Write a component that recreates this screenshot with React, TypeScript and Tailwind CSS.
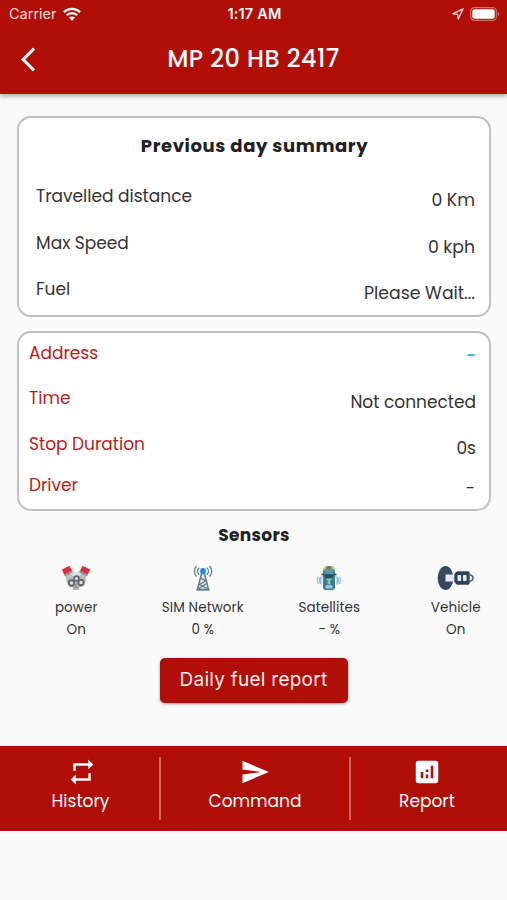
import type { ReactNode } from 'react'
import { MdAnalytics, MdArrowBackIos, MdRepeat, MdSend } from 'react-icons/md'

const summary = [
  { label: 'Travelled distance', value: '0 Km' },
  { label: 'Max Speed', value: '0 kph' },
  { label: 'Fuel', value: 'Please Wait...' },
]

const details = [
  { label: 'Address', value: '-', rowClass: 'h-[45px]', valueClass: 'mt-[3px] font-medium text-[#3aa5dc]' },
  { label: 'Time', value: 'Not connected', rowClass: 'h-[46px]', valueClass: 'mt-1 text-[#333]' },
  { label: 'Stop Duration', value: '0s', rowClass: 'h-[41px]', valueClass: 'mt-1 text-[#333]' },
  { label: 'Driver', value: '-', rowClass: 'h-[24px]', valueClass: 'mt-[3px] pr-px text-[#333]' },
]

function WifiIcon() {
  return (
    <svg width="18" height="14" viewBox="0 0 18 14" fill="none" stroke="white" strokeWidth="2.3">
      <path d="M0.9 5.2a11.5 11.5 0 0 1 16.2 0" />
      <path d="M3.7 8.3a7.5 7.5 0 0 1 10.6 0" />
      <path d="M9 13.8 6 10.8a4.1 4.1 0 0 1 6 0z" fill="white" stroke="none" />
    </svg>
  )
}

function LocationIcon() {
  return (
    <svg width="12" height="12" viewBox="0 0 12 12" fill="none" stroke="#f6cfcd" strokeWidth="1.4" strokeLinejoin="round">
      <path d="M11 1 1 5.7l4.6.7.7 4.6z" />
    </svg>
  )
}

function BatteryIcon() {
  return (
    <svg width="30" height="14" viewBox="0 0 30 14">
      <rect x="0.7" y="0.7" width="25.6" height="12.6" rx="3.6" fill="none" stroke="#d3716d" strokeWidth="1.2" />
      <rect x="2.3" y="2.3" width="22.4" height="9.4" rx="2.2" fill="white" />
      <path d="M27.8 4.6c2 .8 2 4 0 4.8z" fill="#d3716d" />
    </svg>
  )
}

function EngineIcon() {
  return (
    <svg width="30" height="26" viewBox="0 0 30 26">
      <path d="M4.500 9 11 5l4 3 4-3 6.500 4-1 8-4 5h-2.500v3h-6v-3H9.500l-4-5z" fill="#b9bbbe" />
      <path d="m8 8 3.500-3 3.500 3 3.500-3L22 8l-4 3h-6z" fill="#dcdddf" />
      <path d="M0.800 4.500 8.500 0.800l2.500 5-7.700 4z" fill="#dc2f3d" />
      <path d="M29.200 4.500 21.500 0.800l-2.500 5 7.700 4z" fill="#dc2f3d" />
      <path d="m3.200 10 7.800-4.200.8 1.600-7.700 4zM26.800 10 19 5.800l-.8 1.600 7.700 4z" fill="#8d9299" />
      <g fill="#dfe0e1" stroke="#65696e" strokeWidth="1.900">
        <circle cx="15.500" cy="13.600" r="2.500" />
        <circle cx="10.500" cy="18" r="2.700" />
        <circle cx="20" cy="17.500" r="2.700" />
      </g>
      <path d="M12 22.500h6M15 19v4" stroke="#95999e" strokeWidth="1.400" />
    </svg>
  )
}

function TowerIcon() {
  return (
    <svg width="20" height="26" viewBox="0 0 20 26" fill="none">
      <g stroke="#55808f" strokeWidth="1.300" strokeLinecap="round">
        <path d="M3.200 1.500a7 7 0 0 0 0 9.500M16.800 1.500a7 7 0 0 1 0 9.500M5.800 3.200a4.300 4.300 0 0 0 0 6M14.200 3.200a4.300 4.300 0 0 1 0 6" />
      </g>
      <path d="M8.500 8.500 4.500 24.500h11l-4-16z" fill="#dfe8ea" stroke="#5d7c87" strokeWidth="1.500" />
      <path d="m8 13 4.500 3-6 3.500 7.500 4" stroke="#5d7c87" strokeWidth="1.300" />
      <path d="m13.500 18.500-8 5.500" stroke="#5d7c87" strokeWidth="1.200" />
      <path d="M3.500 24.800h13" stroke="#5d7c87" strokeWidth="1.500" />
      <circle cx="10" cy="6" r="2.900" fill="#2387e8" />
    </svg>
  )
}

function CarSensorIcon() {
  return (
    <svg width="26" height="26" viewBox="0 0 26 26">
      <path d="M7.500 4q1-3 5.500-3t5.500 3l.7 5-.2 13q0 3-3 3h-6q-3 0-3-3L6.800 9z" fill="#3f7d88" />
      <path d="M7.300 5.500Q8 1.500 11 .8l-.5 3.200zM18.700 5.500Q18 1.500 15 .8l.5 3.200z" fill="#e5bd2f" />
      <path d="M9.500 4.500q3.500-2 7 0l.7 4.500H8.800z" fill="#5b97ad" />
      <path d="M8.300 10q4.700-2 9.400 0l-1.700 3.500h-6z" fill="#254f60" />
      <path d="M9.500 13.500h7l-2.200 2v3.500h-2.600v-3.500z" fill="#7ec4bd" />
      <path d="M9.300 20.500q3.700-1.500 7.400 0l-.7 3h-6z" fill="#8fc7ef" />
      <path d="M5.500 9.500h2.500M18 9.500h2.500" stroke="#254f60" strokeWidth="1.600" />
      <path d="M5.500 11v9Q3 19 3 15.500T5.500 11zM20.500 11v9q2.500-1 2.500-4.500T20.500 11z" fill="#8db8e2" />
      <path d="M2.300 12q-1.700 3.500 0 7M23.700 12q1.700 3.500 0 7" fill="none" stroke="#a9c9ea" strokeWidth="1.600" />
    </svg>
  )
}

function IgnitionIcon() {
  return (
    <svg width="37" height="26" viewBox="0 0 37 26">
      <ellipse cx="8.500" cy="13" rx="7.800" ry="12" fill="#34495e" />
      <rect x="8.500" y="9.500" width="8" height="7" fill="#e6e8f5" />
      <path d="M20 6.300h11q1.700 0 1.700 1.700v10q0 1.700-1.700 1.700H20L17.300 17V9z" fill="#2c4359" />
      <rect x="20.500" y="10" width="3.600" height="6" rx="0.800" fill="#e6e8f5" />
      <rect x="26" y="10" width="3.600" height="6" rx="0.800" fill="#e6e8f5" />
      <path d="M32.500 9.500q3.500 1 3.500 3.500t-3.500 3.500" fill="none" stroke="#4d6073" strokeWidth="1.500" />
    </svg>
  )
}

function Sensor({ icon, name, value }: { icon: ReactNode; name: string; value: string }) {
  return (
    <div className="flex flex-col items-center text-[13.500px] leading-[22px] tracking-[0.1px] text-[#333]">
      <div className="flex h-[26px] items-center">{icon}</div>
      <div className="mt-[6px]">{name}</div>
      <div>{value}</div>
    </div>
  )
}

export default function App() {
  return (
    <div className="h-[900px] w-[507px] overflow-hidden bg-[#fafafa] font-['Poppins','Inter',sans-serif] text-[#212121]">
      {/* Header */}
      <header className="h-[94px] bg-[#b00e07] text-white shadow-[0_2px_5px_rgba(0,0,0,0.35)]">
        <div className="grid h-[28px] grid-cols-3 items-center pl-[9px] pr-[7px] font-['Inter',sans-serif] text-[14.500px]">
          <div className="flex items-center gap-[6px] text-[#f9dedd]">
            <span>Carrier</span>
            <WifiIcon />
          </div>
          <div className="text-center font-semibold tracking-[0.2px]">1:17 AM</div>
          <div className="flex items-center justify-end gap-[6px]">
            <LocationIcon />
            <BatteryIcon />
          </div>
        </div>
        <div className="grid h-[60px] grid-cols-[60px_1fr_60px] items-center">
          <button className="pl-[21px] pt-[3px]" aria-label="Back">
            <MdArrowBackIos size={29} />
          </button>
          <h1 className="pt-px text-center text-[24px] font-medium leading-[30px] tracking-[0.450px]">MP 20 HB 2417</h1>
        </div>
      </header>

      {/* Previous day summary */}
      <section className="ml-[17px] mt-[22px] h-[201px] w-[474px] rounded-[14px] border-2 border-[#c0c0c0] bg-white pl-[17px] pr-[14px]">
        <h2 className="pr-[2px] pt-[16px] text-center text-[18px] font-bold leading-[24px] tracking-[0.600px]">Previous day summary</h2>
        <div className="pt-[26px] text-[17px] leading-[24px] text-[#333]">
          {summary.map((row) => (
            <div key={row.label} className="flex h-[46.500px] items-start justify-between">
              <span>{row.label}</span>
              <span className="mt-1 text-[17.300px]">{row.value}</span>
            </div>
          ))}
        </div>
      </section>

      {/* Vehicle details */}
      <section className="ml-[17px] mt-[14px] h-[180px] w-[474px] rounded-[14px] border-2 border-[#c0c0c0] bg-white pl-[10px] pr-[13px] pt-[8px] text-[17px] leading-[24px]">
        {details.map((row) => (
          <div key={row.label} className={`flex items-start justify-between ${row.rowClass}`}>
            <span className="text-[#b71c1c]">{row.label}</span>
            <span className={row.valueClass}>{row.value}</span>
          </div>
        ))}
      </section>

      {/* Sensors */}
      <h2 className="mt-[12px] pl-px text-center text-[17px] font-bold leading-[24px] tracking-[0.300px]">Sensors</h2>
      <div className="ml-[13px] mt-[18px] grid w-[506px] grid-cols-4">
        <Sensor icon={<EngineIcon />} name="power" value="On" />
        <Sensor icon={<TowerIcon />} name="SIM Network" value="0 %" />
        <Sensor icon={<CarSensorIcon />} name="Satellites" value="- %" />
        <Sensor icon={<IgnitionIcon />} name="Vehicle" value="On" />
      </div>

      <div className="mt-[17px] flex justify-center">
        <button className="h-[45px] w-[188px] rounded-[5px] bg-[#b00e07] font-['Inter',sans-serif] text-[19px] tracking-[0.250px] text-[#fff0ef] shadow-[0_1px_3px_rgba(0,0,0,0.4)]">
          Daily fuel report
        </button>
      </div>

      {/* Bottom bar */}
      <nav className="mt-[43px] flex h-[85px] bg-[#b00e07] pb-[11px] pt-[11px] text-[17px] text-white">
        <button className="flex w-[161px] flex-col items-center border-r-2 border-[#cb6762]">
          <MdRepeat size={30} className="ml-1" />
          <span className="ml-[2px] mt-[2px] leading-[24px]">History</span>
        </button>
        <button className="flex w-[190px] flex-col items-center border-r-2 border-[#cb6762]">
          <MdSend size={30} />
          <span className="mt-[2px] leading-[24px]">Command</span>
        </button>
        <button className="flex flex-1 flex-col items-center pr-[4px]">
          <MdAnalytics size={30} />
          <span className="mt-[2px] leading-[24px]">Report</span>
        </button>
      </nav>
    </div>
  )
}
